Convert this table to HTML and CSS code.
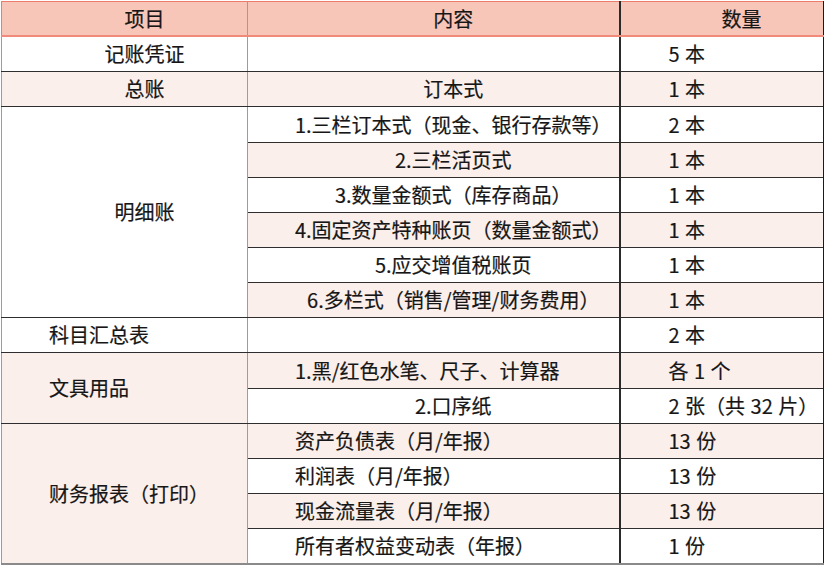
FILE: index.html
```html
<!DOCTYPE html>
<html lang="zh-CN">
<head>
<meta charset="utf-8">
<title>会计用品清单</title>
<link rel="stylesheet" href="styles.css">
</head>
<body>
<table class="sheet">
  <colgroup>
    <col class="c1">
    <col class="c2">
    <col class="c3">
  </colgroup>
  <thead>
    <tr class="head">
      <th class="k">项目</th>
      <th class="v">内容</th>
      <th class="q">数量</th>
    </tr>
  </thead>
  <tbody>
    <tr>
      <td class="k mid">记账凭证</td>
      <td class="v mid"></td>
      <td class="q">5 本</td>
    </tr>
    <tr class="alt">
      <td class="k mid">总账</td>
      <td class="v mid">订本式</td>
      <td class="q">1 本</td>
    </tr>
    <tr class="tall">
      <td class="k mid" rowspan="6">明细账</td>
      <td class="v mid">1.三栏订本式（现金、银行存款等）</td>
      <td class="q">2 本</td>
    </tr>
    <tr class="alt">
      <td class="v mid">2.三栏活页式</td>
      <td class="q">1 本</td>
    </tr>
    <tr>
      <td class="v mid">3.数量金额式（库存商品）</td>
      <td class="q">1 本</td>
    </tr>
    <tr class="alt">
      <td class="v mid">4.固定资产特种账页（数量金额式）</td>
      <td class="q">1 本</td>
    </tr>
    <tr>
      <td class="v mid">5.应交增值税账页</td>
      <td class="q">1 本</td>
    </tr>
    <tr class="alt">
      <td class="v mid">6.多栏式（销售/管理/财务费用）</td>
      <td class="q">1 本</td>
    </tr>
    <tr>
      <td class="k left">科目汇总表</td>
      <td class="v mid"></td>
      <td class="q">2 本</td>
    </tr>
    <tr class="alt tall">
      <td class="k left" rowspan="2">文具用品</td>
      <td class="v left">1.黑/红色水笔、尺子、计算器</td>
      <td class="q">各 1 个</td>
    </tr>
    <tr>
      <td class="v mid">2.口序纸</td>
      <td class="q">2 张（共 32 片）</td>
    </tr>
    <tr class="alt">
      <td class="k left" rowspan="4">财务报表（打印）</td>
      <td class="v left">资产负债表（月/年报）</td>
      <td class="q">13 份</td>
    </tr>
    <tr>
      <td class="v left">利润表（月/年报）</td>
      <td class="q">13 份</td>
    </tr>
    <tr class="alt">
      <td class="v left">现金流量表（月/年报）</td>
      <td class="q">13 份</td>
    </tr>
    <tr class="last">
      <td class="v left">所有者权益变动表（年报）</td>
      <td class="q">1 份</td>
    </tr>
  </tbody>
</table>
</body>
</html>
```

FILE: styles.css
```css
html, body {
  margin: 0;
  padding: 0;
  background: #ffffff;
}

body {
  padding: 1px 0 0 1px;
  font-family: "Noto Sans CJK SC", "Noto Sans", sans-serif;
  font-size: 20px;
  color: #161616;
  -webkit-text-stroke: 0.2px #161616;
}

.sheet {
  border-collapse: collapse;
  table-layout: fixed;
  width: 822px;
  border-top: 1px solid #ec7c6c;
  border-left: 1px solid #ec7c6c;
  border-right: 2px solid #1a1a1a;
  border-bottom: 2px solid #8a8a8a;
}

.c1 { width: 246px; }
.c2 { width: 372px; }
.c3 { width: 204px; }

.sheet th,
.sheet td {
  height: 34px;
  padding: 0;
  line-height: 24px;
  white-space: nowrap;
  vertical-align: middle;
  border-bottom: 1px solid #2e2e2e;
}

.sheet tr.tall td {
  height: 35px;
}

.sheet tr {
  background: #ffffff;
}

.sheet tr.alt {
  background: #fbefeb;
}

.sheet .head {
  background: #f7c6b8;
}

.sheet .head th {
  font-weight: normal;
  height: 33px;
  text-align: center;
  padding-left: 40px;
  border-bottom: 2px solid #f08a7a;
}

.sheet .k {
  border-right: 1px solid #ec7c6c;
}

.sheet .v {
  border-right: 2px solid #2a2a2a;
}

.sheet td.k[rowspan="2"],
.sheet td.k[rowspan="4"] {
  background: #fbefeb;
}

.sheet td.k[rowspan="6"] {
  background: #ffffff;
}

.sheet td.mid {
  text-align: center;
  padding-left: 40px;
}

.sheet td.left {
  text-align: left;
  padding-left: 47px;
}

.sheet td.q {
  text-align: left;
  padding-left: 48px;
  word-spacing: 1px;
}

.sheet tr.last td {
  border-bottom: 2px solid #8a8a8a;
}
```
